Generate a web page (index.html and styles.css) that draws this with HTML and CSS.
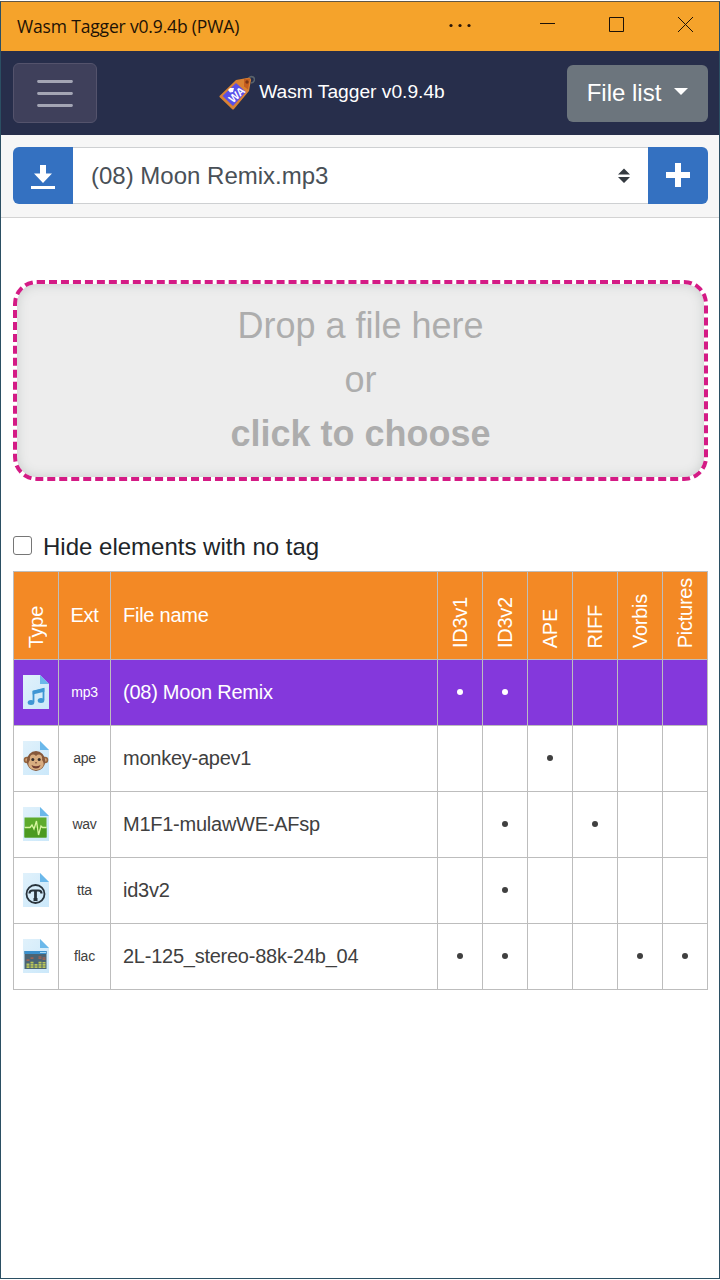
FILE: index.html
```html
<!DOCTYPE html>
<html lang="en">
<head>
<meta charset="utf-8">
<title>Wasm Tagger v0.9.4b (PWA)</title>
<link rel="stylesheet" href="styles.css">
</head>
<body>
<svg class="defs" width="0" height="0">
  <defs>
    <linearGradient id="paper" x1="0" y1="0" x2="1" y2="1"><stop offset="0" stop-color="#e0f1fb"/><stop offset="1" stop-color="#cbe8fa"/></linearGradient>
    <symbol id="sheet" viewBox="0 0 26 34"><path d="M0 0h17l9 9v25H0z" fill="url(#paper)"/><path d="M17 0l9 9h-9z" fill="#6bb8ea"/></symbol>
  </defs>
</svg>
<div class="window">
  <header class="titlebar">
    <span class="titlebar-text">Wasm Tagger v0.9.4b (PWA)</span>
    <svg class="window-controls" width="250" height="24" viewBox="0 0 250 24">
      <g fill="#2a1608"><circle cx="6" cy="13.500" r="1.600"/><circle cx="15" cy="13.500" r="1.600"/><circle cx="24" cy="13.500" r="1.600"/></g>
      <g fill="none" stroke="#1c1208" stroke-width="1"><path d="M95 11.500h15M164.500 5.500h14v14h-14zM233 5l15 15M248 5l-15 15"/></g>
    </svg>
  </header>
  <nav class="navbar">
    <button class="menu-button" aria-label="Menu">
      <svg width="36" height="28" viewBox="0 0 36 28"><path d="M1.500 2.500h33M1.500 14.500h33M1.500 26.500h33" stroke="#a3a5b4" stroke-width="2.800" stroke-linecap="round"/></svg>
    </button>
    <div class="brand">
      <svg width="36" height="36" viewBox="0 0 36 36">
        <path d="M29 6c0-4 3-5 5-4 3 2 1 6-2 6" fill="none" stroke="#59636c" stroke-width="1.600"/>
        <path d="M.5 21L17 5l11-2q4-1 4 2l-2 11-15 18q-1 1-2 0L.5 22z" fill="#d98233"/>
        <path d="M25 4l6-.5-2 11-4-3z" fill="#c55e20"/>
        <path d="M3.500 21L17 8l10 9-13 14z" fill="#5950e8"/>
        <circle cx="28" cy="7" r="1.700" fill="#793516"/>
        <path d="M9 15l2-2 4 0-1 4-3 .5z" fill="#fff"/>
        <text x="18" y="23.500" class="tag-text" transform="rotate(-42 18 20)">WA</text>
      </svg>
      <span class="brand-text">Wasm Tagger v0.9.4b</span>
    </div>
    <button class="list-button"><span>File list</span><i class="caret"></i></button>
  </nav>
  <div class="toolbar">
    <button class="tool-button tool-left" aria-label="Download"><svg width="24" height="24" viewBox="0 0 24 24" fill="#fff"><path d="M9 0h6v8.500h6L12 18 3 8.500h6zM0 21h24v3H0z"/></svg></button>
    <div class="select"><span>(08) Moon Remix.mp3</span><svg width="12" height="16" viewBox="0 0 12 16" fill="#343a40"><path d="M0 6.500L6 .5l6 6zM0 9h12l-6 6z"/></svg></div>
    <button class="tool-button tool-right" aria-label="Add"><svg width="24" height="24" viewBox="0 0 24 24" fill="#fff"><path d="M9 0h6v9h9v6h-9v9H9v-9H0V9h9z"/></svg></button>
  </div>
  <main class="content">
    <div class="dropzone"><span>Drop a file here</span><span>or</span><b>click to choose</b></div>
    <label class="hide-option"><i class="checkbox"></i><span>Hide elements with no tag</span></label>
    <div class="table">
      <div class="row head">
        <div class="cell vertical"><span>Type</span></div><div class="cell ext">Ext</div><div class="cell name">File name</div>
        <div class="cell vertical"><span>ID3v1</span></div><div class="cell vertical"><span>ID3v2</span></div><div class="cell vertical"><span>APE</span></div><div class="cell vertical"><span>RIFF</span></div><div class="cell vertical"><span>Vorbis</span></div><div class="cell vertical"><span>Pictures</span></div>
      </div>
      <div class="row selected">
        <div class="cell"><svg class="file-icon" viewBox="0 0 26 34"><use href="#sheet"/><path d="M10.500 27V16.500l10-2.500v11" fill="none" stroke="#3f96d4" stroke-width="1.800"/><path d="M9.600 16l11.800-2.800v3.600L9.600 19.600z" fill="#3f96d4"/><ellipse cx="8" cy="27.500" rx="3.300" ry="2.500" fill="#3f96d4"/><ellipse cx="18" cy="25.500" rx="3.300" ry="2.500" fill="#3f96d4"/></svg></div>
        <div class="cell ext">mp3</div><div class="cell name">(08) Moon Remix</div>
        <div class="cell"><i class="dot"></i></div><div class="cell"><i class="dot"></i></div><div class="cell"></div><div class="cell"></div><div class="cell"></div><div class="cell"></div>
      </div>
      <div class="row">
        <div class="cell"><svg class="file-icon" viewBox="0 0 26 34"><use href="#sheet"/><circle cx="4" cy="19" r="3.300" fill="#96663f"/><circle cx="22" cy="19" r="3.300" fill="#96663f"/><circle cx="4" cy="19" r="1.700" fill="#d6a87b"/><circle cx="22" cy="19" r="1.700" fill="#d6a87b"/><ellipse cx="13" cy="20" rx="9.300" ry="10" fill="#86593c"/><path d="M13 15c3-3 7-1 6 4 4 5 0 10-6 10s-10-5-6-10c-1-5 3-7 6-4z" fill="#d9ad80"/><circle cx="9.800" cy="18.500" r="1.500" fill="#342c2a"/><circle cx="16.200" cy="18.500" r="1.500" fill="#342c2a"/><path d="M12 21.800h2" stroke="#784337"/><path d="M8.500 24q4.500 2.400 9 0-1 3.500-4.500 3.500T8.500 24z" fill="#713c30"/></svg></div>
        <div class="cell ext">ape</div><div class="cell name">monkey-apev1</div>
        <div class="cell"></div><div class="cell"></div><div class="cell"><i class="dot"></i></div><div class="cell"></div><div class="cell"></div><div class="cell"></div>
      </div>
      <div class="row">
        <div class="cell"><svg class="file-icon" viewBox="0 0 26 34"><use href="#sheet"/><path d="M1.500 10.500h22v20h-22z" fill="#5dab2d"/><path d="M1.500 21h22v9.500h-22z" fill="#4b9a20"/><path d="M2 20.500h5l2-2.500 2 4 2.500-8 2 14 2.500-9 1.500 1.500h4" fill="none" stroke="#d7f6a0" stroke-width="1.300"/></svg></div>
        <div class="cell ext">wav</div><div class="cell name">M1F1-mulawWE-AFsp</div>
        <div class="cell"></div><div class="cell"><i class="dot"></i></div><div class="cell"></div><div class="cell"><i class="dot"></i></div><div class="cell"></div><div class="cell"></div>
      </div>
      <div class="row">
        <div class="cell"><svg class="file-icon" viewBox="0 0 26 34"><use href="#sheet"/><circle cx="12.500" cy="21" r="9" fill="none" stroke="#29333b" stroke-width="1.800"/><path d="M6.500 20.500q0-3 3-3h6q3 0 3 3" fill="none" stroke="#29333b" stroke-width="2.200"/><path d="M12.500 17v10M10.500 26.500h4" fill="none" stroke="#29333b" stroke-width="2.800"/></svg></div>
        <div class="cell ext">tta</div><div class="cell name">id3v2</div>
        <div class="cell"></div><div class="cell"><i class="dot"></i></div><div class="cell"></div><div class="cell"></div><div class="cell"></div><div class="cell"></div>
      </div>
      <div class="row">
        <div class="cell"><svg class="file-icon" viewBox="0 0 26 34"><use href="#sheet"/><path d="M1.500 12h22v18h-22z" fill="#4b6473"/><path d="M1.500 12h22v3h-22z" fill="#3b91ce"/><path d="M17 13.500h6" stroke="#a6dbf5"/><g fill="none" stroke-width="3" stroke-dasharray="1.700 .6"><path d="M5 29v-5M9 29v-7M13 29v-4M17 29v-7M21 29v-6" stroke="#bac659"/><path d="M5 22v-2M9 20v-2M17 20v-3M21 21v-3" stroke="#9c6454"/></g></svg></div>
        <div class="cell ext">flac</div><div class="cell name">2L-125_stereo-88k-24b_04</div>
        <div class="cell"><i class="dot"></i></div><div class="cell"><i class="dot"></i></div><div class="cell"></div><div class="cell"></div><div class="cell"><i class="dot"></i></div><div class="cell"><i class="dot"></i></div>
      </div>
    </div>
  </main>
</div>
</body>
</html>
```
FILE: styles.css
```css
* { box-sizing: border-box; }
body { margin: 0; padding: 1px 0; background: #fff; color: #212529; font-family: "Liberation Sans", Arial, sans-serif; }
button { margin: 0; padding: 0; border: 0; font: inherit; color: #fff; display: flex; align-items: center; justify-content: center; }
svg { display: block; flex: none; }
.defs { position: absolute; }
.window { height: 1278px; border: 1px solid #2b4f63; border-top-color: #605645; display: flex; flex-direction: column; }
.titlebar { height: 49px; background: #f5a32b; padding: 0 24px 0 16px; display: flex; justify-content: space-between; align-items: flex-start; }
.titlebar-text { font: 17.5px/49px "Open Sans", "Noto Sans", sans-serif; color: #1d1206; letter-spacing: -.16px; }
.window-controls { margin-top: 10px; }
.navbar { height: 84px; background: #272e4b; padding: 0 11px 0 12px; display: flex; align-items: center; justify-content: space-between; }
.menu-button { width: 84px; height: 60px; background: #3f405b; border: 1px solid #54536c; border-radius: 6px; }
.brand { display: flex; align-items: center; gap: 4px; color: #fff; margin-left: 0; }
.brand-text { font-size: 19.2px; line-height: 28px; margin-top: -3px; white-space: nowrap; }
.tag-text { font: bold 11px "Liberation Sans", sans-serif; fill: #fff; text-anchor: middle; }
.list-button { width: 141px; height: 57px; background: #6c757d; border-radius: 6px; font-size: 24px; gap: 13px; }
.caret { border: 7px solid transparent; border-top-color: #fff; border-bottom: 0; margin-top: -4px; }
.toolbar { height: 83px; background: #f6f6f6; border-bottom: 1px solid #d3d3d3; padding: 12px 11px 0 12px; display: flex; }
.tool-button { width: 60px; height: 57px; background: #3471c1; }
.tool-left { border-radius: 6px 0 0 6px; padding-top: 3px; }
.tool-right { border-radius: 0 6px 6px 0; padding-bottom: 2px; }
.select { flex: 1; height: 57px; background: #fff; border: 1px solid #ced0d2; border-width: 1px 0; padding: 0 18px; display: flex; align-items: center; justify-content: space-between; font-size: 24px; color: #495057; }
.select svg { margin-top: 1px; }
.content { padding: 62px 11px 0 12px; }
.dropzone { height: 201px; border: 4px dashed #d41b85; border-radius: 24px; background: #ededed; background-clip: padding-box; box-shadow: inset 0 0 12px #c8cccb; display: flex; flex-direction: column; align-items: center; padding-top: 15px; font-size: 36px; line-height: 54px; color: #adadad; }
.hide-option { margin-top: 51px; height: 30px; display: flex; align-items: center; gap: 11px; font-size: 24px; }
.checkbox { width: 19px; height: 19px; border: 1px solid #767676; border-radius: 3px; background: #fff; margin-top: -3px; }
.table { margin-top: 9px; border: 1px solid #bdbdbd; border-width: 1px 0 0 1px; font-size: 20px; letter-spacing: -.25px; }
.row { display: grid; grid-template-columns: 45px 52px 327px repeat(6, 45px); height: 66px; color: #404040; }
.cell { border: 1px solid #bdbdbd; border-width: 0 1px 1px 0; padding-bottom: 1px; display: flex; align-items: center; justify-content: center; white-space: nowrap; }
.head { height: 88px; background: #f38925; color: #fff; }
.selected { background: #8438dc; color: #fff; }
.name { justify-content: flex-start; padding-left: 12px; }
.ext { font-size: 14px; padding-bottom: 2px; }
.head .ext { font-size: 20px; padding-bottom: 1px; }
.vertical { align-items: flex-end; padding-bottom: 11px; }
.vertical span { writing-mode: vertical-rl; transform: rotate(180deg); line-height: 24px; }
.file-icon { width: 26px; height: 34px; margin-top: -1px; }
.dot { width: 6px; height: 6px; border-radius: 50%; background: currentColor; margin-top: -1px; }
```
